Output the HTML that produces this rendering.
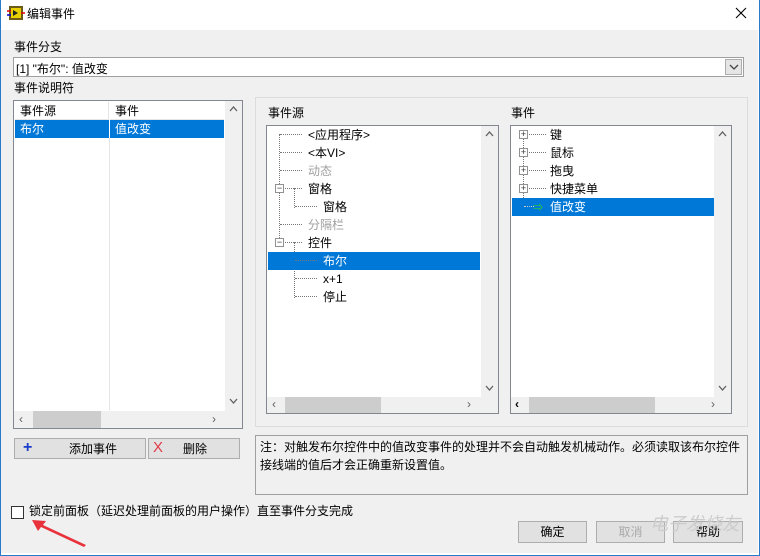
<!DOCTYPE html>
<html><head><meta charset="utf-8"><style>
*{box-sizing:border-box;margin:0;padding:0}
body{width:760px;height:556px;background:#fff;font-family:"Liberation Sans","Noto Sans CJK SC",sans-serif;font-size:12px;color:#000;position:relative;overflow:hidden}
.a{position:absolute}
.win{left:0;top:0;width:760px;height:556px;border:1px solid #2b79c9;border-top:none}
.body{left:1px;top:30px;width:757px;height:523px;background:#f0f0f0}
.box{background:#fff;border:1px solid #828790}
.sel{background:#0078d7;color:#fff}
.btn{background:#e1e1e1;border:1px solid #adadad;text-align:center;line-height:20px}
.sb{background:#f0f0f0}
.th{background:#cdcdcd}
.t{line-height:18px;white-space:nowrap}
.dot{border-color:#777;border-style:dotted;border-width:0}
.pm{width:9px;height:9px;border:1px solid #919191;background:#fff;font-size:9px;line-height:7px;text-align:center;color:#333}
.gray{color:#a0a0a0}
</style></head><body>
<div class="a win"></div>
<div class="a body"></div>
<!-- title -->
<svg class="a" style="left:7px;top:5px" width="18" height="16"><rect x="2" y="1" width="14" height="14" fill="#6b5a1a"/><rect x="4" y="3" width="10" height="10" fill="#e8d000"/><path d="M6 5 L11 8 L6 11Z" fill="#222"/><line x1="0" y1="6" x2="4" y2="6" stroke="#d00" stroke-width="1.5"/><line x1="0" y1="10" x2="4" y2="10" stroke="#00c" stroke-width="1.5"/><line x1="14" y1="8" x2="18" y2="8" stroke="#d00" stroke-width="1.5"/></svg>
<div class="a" style="left:27px;top:5px;font-size:12px">编辑事件</div>
<svg class="a" style="left:735px;top:7px" width="12" height="12"><path d="M1 1L11 11M11 1L1 11" stroke="#000" stroke-width="1.1"/></svg>

<div class="a" style="left:14px;top:38px">事件分支</div>
<div class="a box" style="left:13px;top:57px;width:731px;height:20px;border-color:#a0a0a0"><div class="a" style="left:2px;top:2px">[1] "布尔": 值改变</div>
<div class="a" style="right:1px;top:1px;width:17px;height:16px;border:1px solid #adadad;background:#e5e5e5"><svg class="a" style="left:3px;top:4px" width="10" height="7"><path d="M1 1L5 5L9 1" stroke="#444" fill="none" stroke-width="1.3"/></svg></div></div>
<div class="a" style="left:14px;top:79px">事件说明符</div>

<!-- left list -->
<div class="a box" style="left:13px;top:100px;width:230px;height:329px">
 <div class="a" style="left:1px;top:1px;width:94px;height:18px;border-right:1px solid #e5e5e5;border-bottom:1px solid #e5e5e5"><span class="a t" style="left:5px;top:0">事件源</span></div>
 <div class="a" style="left:96px;top:1px;width:114px;height:18px;border-bottom:1px solid #e5e5e5"><span class="a t" style="left:5px;top:0">事件</span></div>
 <div class="a sel" style="left:1px;top:19px;width:94px;height:18px"><span class="a t" style="left:5px">布尔</span></div>
 <div class="a sel" style="left:96px;top:19px;width:114px;height:18px"><span class="a t" style="left:5px">值改变</span></div>
 <div class="a" style="left:95px;top:37px;width:1px;height:272px;background:#e5e5e5"></div>
 <div class="a sb" style="left:211px;top:0;width:17px;height:310px"><svg class="a" style="left:4px;top:5px" width="9" height="6"><path d="M1 5L4.5 1L8 5" stroke="#606060" fill="none" stroke-width="1.3"/></svg><svg class="a" style="left:4px;top:297px" width="9" height="6"><path d="M1 1L4.5 5L8 1" stroke="#606060" fill="none" stroke-width="1.3"/></svg></div>
 <div class="a sb" style="left:0;top:310px;width:228px;height:17px"><div class="a th" style="left:19px;top:0;width:68px;height:17px"></div><span class="a" style="left:5px;top:1px;color:#606060">&lsaquo;</span><span class="a" style="left:198px;top:1px;color:#606060">&rsaquo;</span></div>
</div>

<!-- right group -->
<div class="a" style="left:255px;top:97px;width:493px;height:330px;border:1px solid #dcdcdc"></div>
<div class="a" style="left:268px;top:104px">事件源</div>
<div class="a" style="left:511px;top:104px">事件</div>

<div class="a box" style="left:266px;top:125px;width:233px;height:289px">
 <div class="a" style="left:12px;top:8px;width:1px;height:110px;border-left:1px dotted #777"></div>
 <div class="a" style="left:27px;top:62px;width:1px;height:20px;border-left:1px dotted #777"></div>
 <div class="a" style="left:27px;top:116px;width:1px;height:56px;border-left:1px dotted #777"></div>
 <div class="a" style="left:13px;top:8px;width:22px;border-top:1px dotted #777"></div>
 <div class="a" style="left:13px;top:26px;width:22px;border-top:1px dotted #777"></div>
 <div class="a" style="left:13px;top:44px;width:22px;border-top:1px dotted #777"></div>
 <div class="a" style="left:13px;top:62px;width:22px;border-top:1px dotted #777"></div>
 <div class="a" style="left:28px;top:80px;width:22px;border-top:1px dotted #777"></div>
 <div class="a" style="left:13px;top:98px;width:22px;border-top:1px dotted #777"></div>
 <div class="a" style="left:13px;top:116px;width:22px;border-top:1px dotted #777"></div>
 <div class="a sel" style="left:1px;top:126px;width:212px;height:18px"></div>
 <div class="a" style="left:28px;top:134px;width:22px;border-top:1px dotted #777"></div>
 <div class="a" style="left:28px;top:152px;width:22px;border-top:1px dotted #777"></div>
 <div class="a" style="left:28px;top:170px;width:22px;border-top:1px dotted #777"></div>
 <div class="a pm" style="left:8px;top:58px">−</div>
 <div class="a pm" style="left:8px;top:112px">−</div>
 <span class="a t" style="left:41px;top:0">&lt;应用程序&gt;</span>
 <span class="a t" style="left:41px;top:18px">&lt;本VI&gt;</span>
 <span class="a t gray" style="left:41px;top:36px">动态</span>
 <span class="a t" style="left:41px;top:54px">窗格</span>
 <span class="a t" style="left:56px;top:72px">窗格</span>
 <span class="a t gray" style="left:41px;top:90px">分隔栏</span>
 <span class="a t" style="left:41px;top:108px">控件</span>
 <span class="a t" style="left:56px;top:126px;color:#fff">布尔</span>
 <span class="a t" style="left:56px;top:144px">x+1</span>
 <span class="a t" style="left:56px;top:162px">停止</span>
 <div class="a sb" style="left:214px;top:0;width:17px;height:271px"><svg class="a" style="left:4px;top:5px" width="9" height="6"><path d="M1 5L4.5 1L8 5" stroke="#606060" fill="none" stroke-width="1.3"/></svg><svg class="a" style="left:4px;top:259px" width="9" height="6"><path d="M1 1L4.5 5L8 1" stroke="#606060" fill="none" stroke-width="1.3"/></svg></div>
 <div class="a sb" style="left:0;top:271px;width:231px;height:16px"><div class="a th" style="left:18px;top:0;width:96px;height:16px"></div><span class="a" style="left:5px;top:0;color:#606060">&lsaquo;</span><span class="a" style="left:200px;top:0;color:#606060">&rsaquo;</span></div>
</div>

<div class="a box" style="left:510px;top:125px;width:222px;height:289px">
 <div class="a" style="left:12px;top:8px;width:1px;height:80px;border-left:1px dotted #777"></div>
 <div class="a" style="left:13px;top:8px;width:22px;border-top:1px dotted #777"></div>
 <div class="a" style="left:13px;top:26px;width:22px;border-top:1px dotted #777"></div>
 <div class="a" style="left:13px;top:44px;width:22px;border-top:1px dotted #777"></div>
 <div class="a" style="left:13px;top:62px;width:22px;border-top:1px dotted #777"></div>
 <div class="a sel" style="left:1px;top:72px;width:202px;height:18px"></div>
 <div class="a" style="left:13px;top:80px;width:10px;border-top:1px dotted #ccc"></div>
 <span class="a" style="left:22px;top:73px;color:#3c3;font-size:10px">⇒</span>
 <div class="a pm" style="left:8px;top:4px">+</div>
 <div class="a pm" style="left:8px;top:22px">+</div>
 <div class="a pm" style="left:8px;top:40px">+</div>
 <div class="a pm" style="left:8px;top:58px">+</div>
 <span class="a t" style="left:39px;top:0">键</span>
 <span class="a t" style="left:39px;top:18px">鼠标</span>
 <span class="a t" style="left:39px;top:36px">拖曳</span>
 <span class="a t" style="left:39px;top:54px">快捷菜单</span>
 <span class="a t" style="left:39px;top:72px;color:#fff">值改变</span>
 <div class="a sb" style="left:203px;top:0;width:17px;height:271px"><svg class="a" style="left:4px;top:5px" width="9" height="6"><path d="M1 5L4.5 1L8 5" stroke="#606060" fill="none" stroke-width="1.3"/></svg><svg class="a" style="left:4px;top:259px" width="9" height="6"><path d="M1 1L4.5 5L8 1" stroke="#606060" fill="none" stroke-width="1.3"/></svg></div>
 <div class="a sb" style="left:0;top:271px;width:220px;height:16px"><div class="a th" style="left:18px;top:0;width:126px;height:16px"></div><span class="a" style="left:4px;top:0;color:#000;font-weight:bold">&lsaquo;</span><span class="a" style="left:200px;top:0;color:#606060">&rsaquo;</span></div>
</div>

<!-- buttons -->
<div class="a btn" style="left:14px;top:438px;width:132px;height:21px"><span class="a" style="left:8px;top:-1px;color:#1a3ccc;font-size:16px;font-weight:bold">+</span><span style="padding-left:26px">添加事件</span></div>
<div class="a btn" style="left:148px;top:438px;width:92px;height:21px"><span class="a" style="left:4px;top:-1px;color:#e23a4a;font-size:15px">X</span><span style="padding-left:2px">删除</span></div>

<div class="a" style="left:255px;top:435px;width:493px;height:60px;border:1px solid #a0a0a0;padding:2px 4px;line-height:18px">注：对触发布尔控件中的值改变事件的处理并不会自动触发机械动作。必须读取该布尔控件接线端的值后才会正确重新设置值。</div>

<div class="a" style="left:11px;top:506px;width:13px;height:13px;border:1px solid #333;background:#fff"></div>
<div class="a" style="left:29px;top:502px">锁定前面板（延迟处理前面板的用户操作）直至事件分支完成</div>
<svg class="a" style="left:30px;top:518px" width="60" height="30"><path d="M2 2 L16 3 L13 7 L56 27 L54 29 L11 9 L8 13 Z" fill="#e8323c"/></svg>

<div class="a btn" style="left:518px;top:521px;width:69px;height:22px">确定</div>
<div class="a btn" style="left:596px;top:521px;width:69px;height:22px;color:#aaa">取消</div>
<div class="a btn" style="left:673px;top:521px;width:70px;height:22px">帮助</div>
<div class="a" style="left:650px;top:510px;color:#ccc;font-size:18px;font-style:italic">电子发烧友</div>
</body></html>
